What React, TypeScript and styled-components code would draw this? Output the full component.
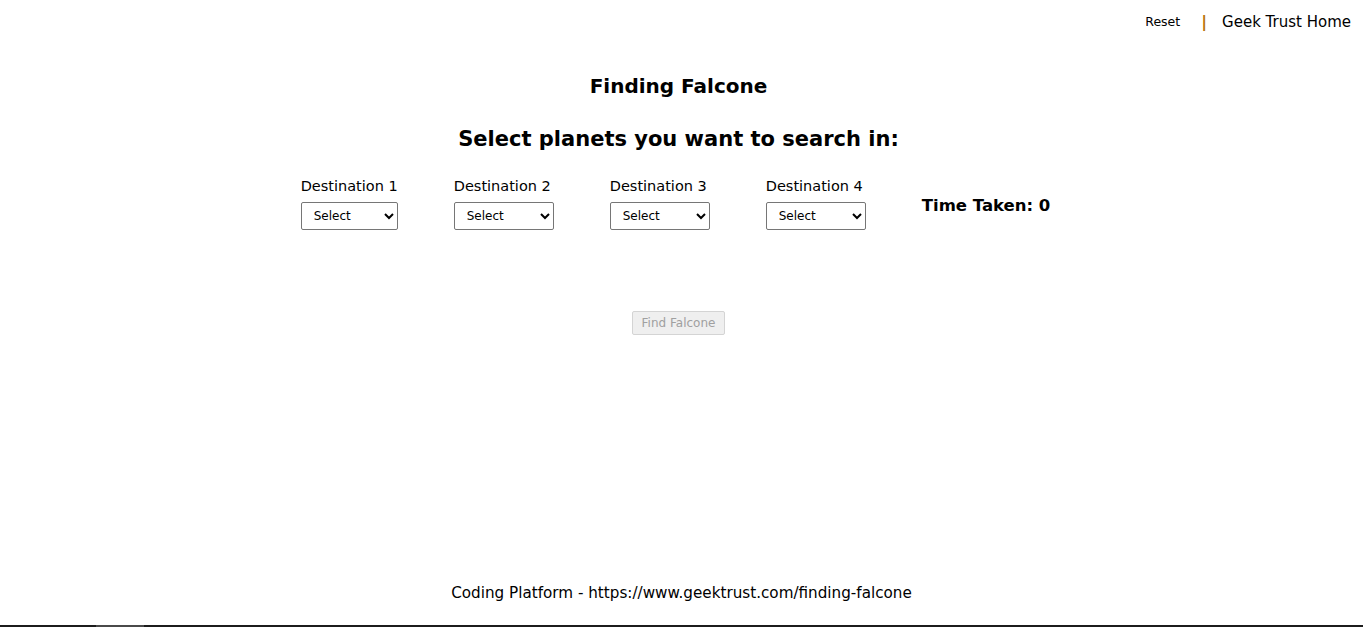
import React from "react";
import styled, { createGlobalStyle } from "styled-components";

const GlobalStyle = createGlobalStyle`
  html, body {
    margin: 0;
    padding: 0;
    background: #ffffff;
  }
  body {
    font-family: "Comic Sans MS", "DejaVu Sans", sans-serif;
    color: #000000;
  }
`;

const Page = styled.div`
  min-height: 100vh;
  box-sizing: border-box;
  display: flex;
  flex-direction: column;
  align-items: center;
`;

const Header = styled.header`
  align-self: stretch;
  display: flex;
  justify-content: flex-end;
  align-items: center;
  height: 43px;
  padding-right: 12px;
`;

const NavLink = styled.a<{ $small?: boolean }>`
  font-size: ${({ $small }) => ($small ? "12.5px" : "15px")};
  color: #000000;
  text-decoration: none;
  cursor: pointer;
`;

const Divider = styled.span`
  margin: 0 15px 0 21px;
  font-size: 16px;
  font-weight: 700;
  color: #b8740a;
`;

const Main = styled.main`
  display: flex;
  flex-direction: column;
  align-items: center;
  margin-right: 6px;
`;

const Title = styled.h1`
  margin: 27px 0 0;
  font-size: 20px;
  font-weight: 700;
  line-height: 32px;
`;

const Subtitle = styled.h2`
  margin: 21px 0 0;
  font-size: 21px;
  font-weight: 700;
  line-height: 32px;
`;

const Destinations = styled.div`
  margin-top: 22px;
  margin-right: 6px;
  display: flex;
  align-items: center;
  column-gap: 56px;
`;

const Destination = styled.div`
  display: flex;
  flex-direction: column;
  row-gap: 6px;
`;

const Label = styled.label`
  font-size: 14.5px;
  line-height: 19px;
`;

const Select = styled.select`
  height: 28px;
  width: 100px;
  padding: 0 8px;
  font-family: inherit;
  font-size: 12px;
  color: #000000;
  background: #ffffff;
  border: 1px solid #767676;
  border-radius: 2px;
`;

const TimeTaken = styled.div`
  font-size: 16.5px;
  font-weight: 700;
  padding-top: 3px;
`;

const FindButton = styled.button`
  margin-top: 81px;
  height: 24px;
  padding: 0 9px;
  font-family: inherit;
  font-size: 12px;
  color: #a0a0a0;
  background: #efefef;
  border: 1px solid #d4d4d4;
  border-radius: 2px;
`;

const Footer = styled.footer`
  margin-top: auto;
  align-self: stretch;
  display: flex;
  flex-direction: column;
  align-items: center;
`;

const FooterText = styled.p`
  margin: 0 0 22px;
  font-size: 15.2px;
  line-height: 20px;
`;

const Track = styled.div`
  align-self: stretch;
  height: 2px;
  display: flex;
  background: #1c1c1c;
`;

const Thumb = styled.div`
  margin-left: 96px;
  width: 48px;
  background: #4a4a4a;
`;

const destinations = [
  { id: 1, width: 97 },
  { id: 2, width: 100 },
  { id: 3, width: 100 },
  { id: 4, width: 100 },
];

export default function App() {
  return (
    <>
      <GlobalStyle />
      <Page>
        <Header>
          <NavLink $small>Reset</NavLink>
          <Divider>|</Divider>
          <NavLink>Geek Trust Home</NavLink>
        </Header>

        <Main>
          <Title>Finding Falcone</Title>
          <Subtitle>Select planets you want to search in:</Subtitle>

          <Destinations>
            {destinations.map((d) => (
              <Destination key={d.id}>
                <Label>Destination {d.id}</Label>
                <Select style={{ width: d.width }} defaultValue="">
                  <option value="">Select</option>
                </Select>
              </Destination>
            ))}
            <TimeTaken>Time Taken: 0</TimeTaken>
          </Destinations>

          <FindButton disabled>Find Falcone</FindButton>
        </Main>

        <Footer>
          <FooterText>Coding Platform - https://www.geektrust.com/finding-falcone</FooterText>
          <Track>
            <Thumb />
          </Track>
        </Footer>
      </Page>
    </>
  );
}
